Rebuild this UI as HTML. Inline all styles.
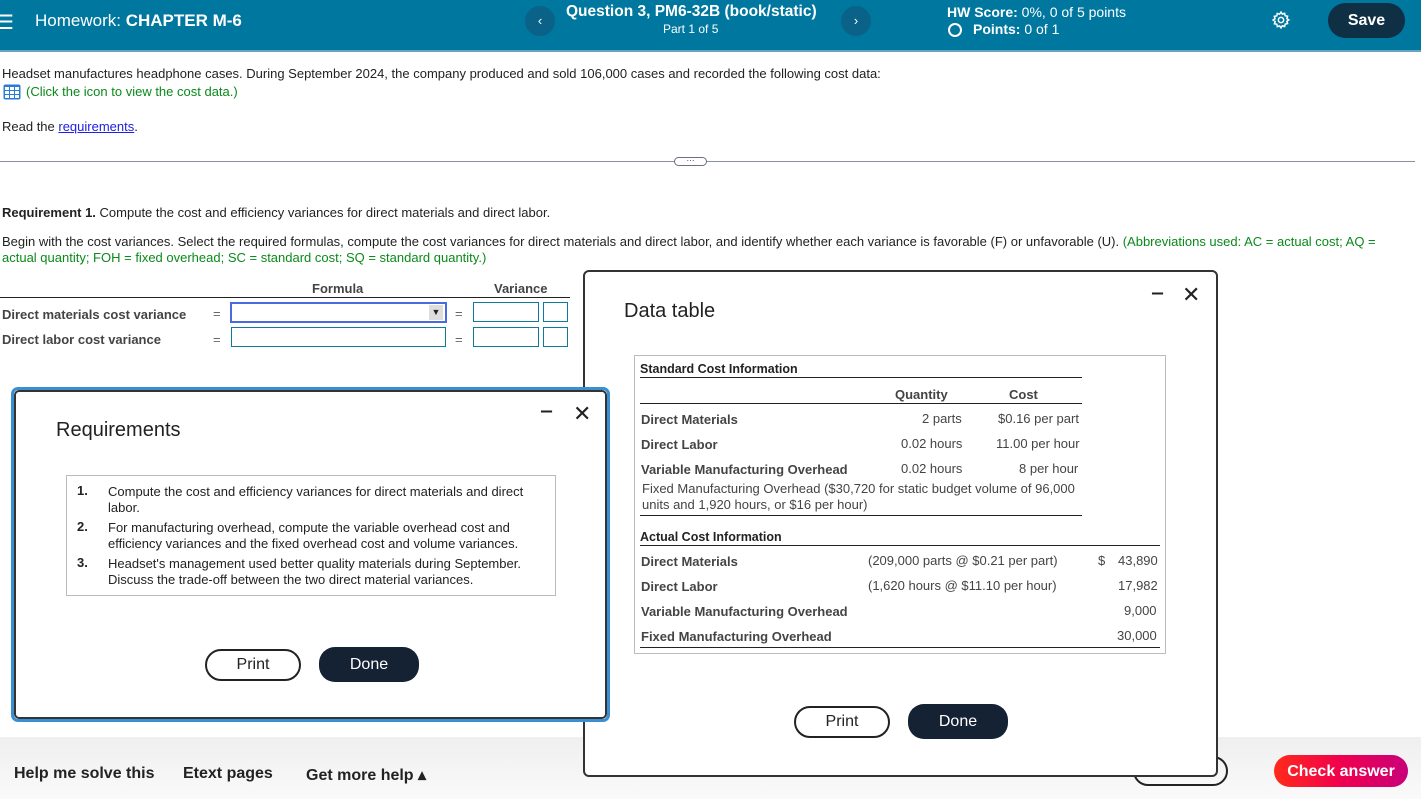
<!DOCTYPE html>
<html><head><meta charset="utf-8"><style>
*{margin:0;padding:0;box-sizing:border-box}
body{width:1421px;height:799px;position:relative;overflow:hidden;font-family:"Liberation Sans",Arial,sans-serif;color:#222;background:#fff;font-size:13px}
.a{position:absolute;white-space:nowrap}
.b{font-weight:bold}
.hdr{position:absolute;left:0;top:0;width:1421px;height:52px;background:#00779f;border-bottom:2px solid #6aa3bd;color:#fff}
.circ{position:absolute;width:30px;height:30px;border-radius:50%;background:#0b6288;color:#fff;text-align:center;line-height:30px;font-size:13px}
.inp{position:absolute;border:1px solid #0f7a9c;background:#fff}
.btn{position:absolute;border-radius:16px;text-align:center;font-size:16px}
</style></head><body>
<div class="hdr">
 <div class="a" style="left:-4px;top:10px;font-size:20px">☰</div>
 <div class="a" style="left:35px;top:11px;font-size:17px">Homework: <b>CHAPTER M-6</b></div>
 <div class="circ" style="left:525px;top:6px">‹</div>
 <div class="a b" style="left:566px;top:3px;font-size:15.5px">Question 3, PM6-32B (book/static)</div>
 <div class="a" style="left:663px;top:22px;font-size:12px">Part 1 of 5</div>
 <div class="circ" style="left:841px;top:6px">›</div>
 <div class="a" style="left:947px;top:4px;font-size:14px"><b>HW Score:</b> 0%, 0 of 5 points</div>
 <div class="a" style="left:948px;top:23px;width:14px;height:14px;border:2px solid #fff;border-radius:50%"></div>
 <div class="a" style="left:973px;top:21px;font-size:14px"><b>Points:</b> 0 of 1</div>
 <svg class="a" style="left:1271px;top:10px" width="20" height="20" viewBox="0 0 24 24" fill="none" stroke="#fff" stroke-width="1.8"><circle cx="12" cy="12" r="3.2"/><path d="M12 2.5l1.6 2.4 2.8-.9.6 2.9 2.9.6-.9 2.8 2.4 1.6-2.4 1.6.9 2.8-2.9.6-.6 2.9-2.8-.9L12 21.5l-1.6-2.4-2.8.9-.6-2.9-2.9-.6.9-2.8L2.5 12l2.4-1.6-.9-2.8 2.9-.6.6-2.9 2.8.9z"/></svg>
 <div class="a b" style="left:1328px;top:3px;width:77px;height:35px;border-radius:18px;background:#0e2f44;text-align:center;line-height:35px;font-size:16px">Save</div>
</div>
<div class="a" style="left:2px;top:66px">Headset manufactures headphone cases. During September 2024, the company produced and sold 106,000 cases and recorded the following cost data:</div>
<svg class="a" style="left:3px;top:84px" width="18" height="16"><rect x="0.5" y="0.5" width="17" height="15" rx="2" fill="#2a7ad8"/><g fill="#fff"><rect x="2" y="3" width="4" height="3"/><rect x="7" y="3" width="4" height="3"/><rect x="12" y="3" width="4" height="3"/><rect x="2" y="7" width="4" height="3"/><rect x="7" y="7" width="4" height="3"/><rect x="12" y="7" width="4" height="3"/><rect x="2" y="11" width="4" height="3"/><rect x="7" y="11" width="4" height="3"/><rect x="12" y="11" width="4" height="3"/></g></svg>
<div class="a" style="left:26px;top:84px;color:#0a8a1a">(Click the icon to view the cost data.)</div>
<div class="a" style="left:2px;top:119px">Read the <span style="color:#2020e0;text-decoration:underline">requirements</span>.</div>
<div class="a" style="left:0;top:161px;width:1415px;border-top:1px solid #8a90a0"></div>
<div class="a" style="left:674px;top:157px;width:33px;height:9px;border:1px solid #6a7080;border-radius:5px;background:#fff;font-size:8px;line-height:5px;text-align:center">···</div>
<div class="a" style="left:2px;top:205px"><b>Requirement 1.</b> Compute the cost and efficiency variances for direct materials and direct labor.</div>
<div class="a" style="left:2px;top:234px">Begin with the cost variances. Select the required formulas, compute the cost variances for direct materials and direct labor, and identify whether each variance is favorable (F) or unfavorable (U). <span style="color:#0a8a1a">(Abbreviations used: AC = actual cost; AQ =</span></div>
<div class="a" style="left:2px;top:250px;color:#0a8a1a">actual quantity; FOH = fixed overhead; SC = standard cost; SQ = standard quantity.)</div>
<div class="a b" style="left:312px;top:281px;color:#444">Formula</div>
<div class="a b" style="left:494px;top:281px;color:#444">Variance</div>
<div class="a" style="left:0;top:297px;width:570px;border-top:1px solid #222"></div>
<div class="a b" style="left:2px;top:307px;color:#444">Direct materials cost variance</div>
<div class="a b" style="left:2px;top:332px;color:#444">Direct labor cost variance</div>
<div class="a" style="left:213px;top:306px;color:#666">=</div><div class="a" style="left:213px;top:332px;color:#666">=</div>
<div class="a" style="left:455px;top:306px;color:#666">=</div><div class="a" style="left:455px;top:332px;color:#666">=</div>
<div class="inp" style="left:230px;top:302px;width:217px;height:21px;border:2px solid #4a6ae0"></div>
<div class="a" style="left:429px;top:305px;width:14px;height:15px;background:#ddd;font-size:9px;text-align:center;line-height:15px">▼</div>
<div class="inp" style="left:231px;top:327px;width:215px;height:20px"></div>
<div class="inp" style="left:473px;top:302px;width:66px;height:20px"></div>
<div class="inp" style="left:543px;top:302px;width:25px;height:20px"></div>
<div class="inp" style="left:473px;top:327px;width:66px;height:20px"></div>
<div class="inp" style="left:543px;top:327px;width:25px;height:20px"></div>
<!-- bottom bar -->
<div class="a" style="left:0;top:737px;width:1421px;height:62px;background:linear-gradient(#efefef,#fafafa)"></div>
<div class="a b" style="left:14px;top:765px;font-size:16px">Help me solve this</div>
<div class="a b" style="left:183px;top:765px;font-size:16px">Etext pages</div>
<div class="a b" style="left:306px;top:765px;font-size:16px">Get more help ▴</div>
<div class="a b" style="left:1133px;top:756px;width:95px;height:30px;border:2px solid #222;border-radius:16px;font-size:15px;text-align:center;line-height:26px">Clear all</div>
<div class="a b" style="left:1274px;top:755px;width:134px;height:32px;border-radius:16px;background:linear-gradient(90deg,#ff2a1a,#f0004e,#c8007a);color:#fff;text-align:center;line-height:34px;font-size:16px">Check answer</div>
<!-- data table modal -->
<div class="a" style="left:583px;top:270px;width:635px;height:507px;border:2px solid #333;border-radius:6px;background:#fff"></div>
<div class="a" style="left:624px;top:300px;font-size:20px">Data table</div>
<div class="a b" style="left:1152px;top:282px;font-size:20px">‒</div>
<div class="a" style="left:1182px;top:282px;font-size:22px">✕</div>
<div class="a" style="left:634px;top:355px;width:532px;height:299px;border:1px solid #bbb"></div>
<div class="a b" style="left:640px;top:362px;font-size:12.5px">Standard Cost Information</div>
<div class="a" style="left:640px;top:377px;width:442px;border-top:1px solid #222"></div>
<div class="a b" style="left:895px;top:387px;color:#444">Quantity</div>
<div class="a b" style="left:1009px;top:387px;color:#444">Cost</div>
<div class="a" style="left:640px;top:403px;width:442px;border-top:1px solid #222"></div>
<div class="a b" style="left:641px;top:412px;color:#444">Direct Materials</div><div class="a" style="left:922px;top:411px;color:#444">2 parts</div><div class="a" style="left:998px;top:411px;color:#444">$0.16 per part</div>
<div class="a b" style="left:641px;top:437px;color:#444">Direct Labor</div><div class="a" style="left:901px;top:436px;color:#444">0.02 hours</div><div class="a" style="left:996px;top:436px;color:#444">11.00 per hour</div>
<div class="a b" style="left:641px;top:462px;color:#444">Variable Manufacturing Overhead</div><div class="a" style="left:901px;top:461px;color:#444">0.02 hours</div><div class="a" style="left:1019px;top:461px;color:#444">8 per hour</div>
<div class="a" style="left:642px;top:481px;color:#444">Fixed Manufacturing Overhead ($30,720 for static budget volume of 96,000</div>
<div class="a" style="left:642px;top:497px;color:#444">units and 1,920 hours, or $16 per hour)</div>
<div class="a" style="left:640px;top:515px;width:442px;border-top:1px solid #222"></div>
<div class="a b" style="left:640px;top:530px;font-size:12.5px">Actual Cost Information</div>
<div class="a" style="left:640px;top:545px;width:520px;border-top:1px solid #222"></div>
<div class="a b" style="left:641px;top:554px;color:#444">Direct Materials</div><div class="a" style="left:868px;top:553px;color:#444">(209,000 parts @ $0.21 per part)</div><div class="a" style="left:1098px;top:553px;color:#444">$</div><div class="a" style="left:1118px;top:553px;color:#444">43,890</div>
<div class="a b" style="left:641px;top:579px;color:#444">Direct Labor</div><div class="a" style="left:868px;top:578px;color:#444">(1,620 hours @ $11.10 per hour)</div><div class="a" style="left:1118px;top:578px;color:#444">17,982</div>
<div class="a b" style="left:641px;top:604px;color:#444">Variable Manufacturing Overhead</div><div class="a" style="left:1124px;top:603px;color:#444">9,000</div>
<div class="a b" style="left:641px;top:629px;color:#444">Fixed Manufacturing Overhead</div><div class="a" style="left:1117px;top:628px;color:#444">30,000</div>
<div class="a" style="left:640px;top:647px;width:520px;border-top:1px solid #222"></div>
<div class="btn" style="left:794px;top:706px;width:96px;height:32px;border:2px solid #222;line-height:28px">Print</div>
<div class="btn" style="left:908px;top:704px;width:100px;height:35px;background:#142234;color:#fff;line-height:35px">Done</div>
<!-- requirements modal -->
<div class="a" style="left:11px;top:387px;width:599px;height:335px;border:3px solid #3a8fd0;border-radius:7px;background:#fff"></div>
<div class="a" style="left:14px;top:390px;width:593px;height:329px;border:2px solid #333;border-radius:5px"></div>
<div class="a" style="left:56px;top:419px;font-size:20px">Requirements</div>
<div class="a b" style="left:541px;top:400px;font-size:20px">‒</div>
<div class="a" style="left:573px;top:401px;font-size:22px">✕</div>
<div class="a" style="left:66px;top:475px;width:490px;height:121px;border:1px solid #bbb"></div>
<div class="a b" style="left:77px;top:483px">1.</div><div class="a" style="left:108px;top:484px;line-height:16px">Compute the cost and efficiency variances for direct materials and direct<br>labor.</div>
<div class="a b" style="left:77px;top:519px">2.</div><div class="a" style="left:108px;top:520px;line-height:16px">For manufacturing overhead, compute the variable overhead cost and<br>efficiency variances and the fixed overhead cost and volume variances.</div>
<div class="a b" style="left:77px;top:555px">3.</div><div class="a" style="left:108px;top:556px;line-height:16px">Headset's management used better quality materials during September.<br>Discuss the trade-off between the two direct material variances.</div>
<div class="btn" style="left:205px;top:649px;width:96px;height:32px;border:2px solid #222;line-height:28px">Print</div>
<div class="btn" style="left:319px;top:647px;width:100px;height:35px;background:#142234;color:#fff;line-height:35px">Done</div>
</body></html>
